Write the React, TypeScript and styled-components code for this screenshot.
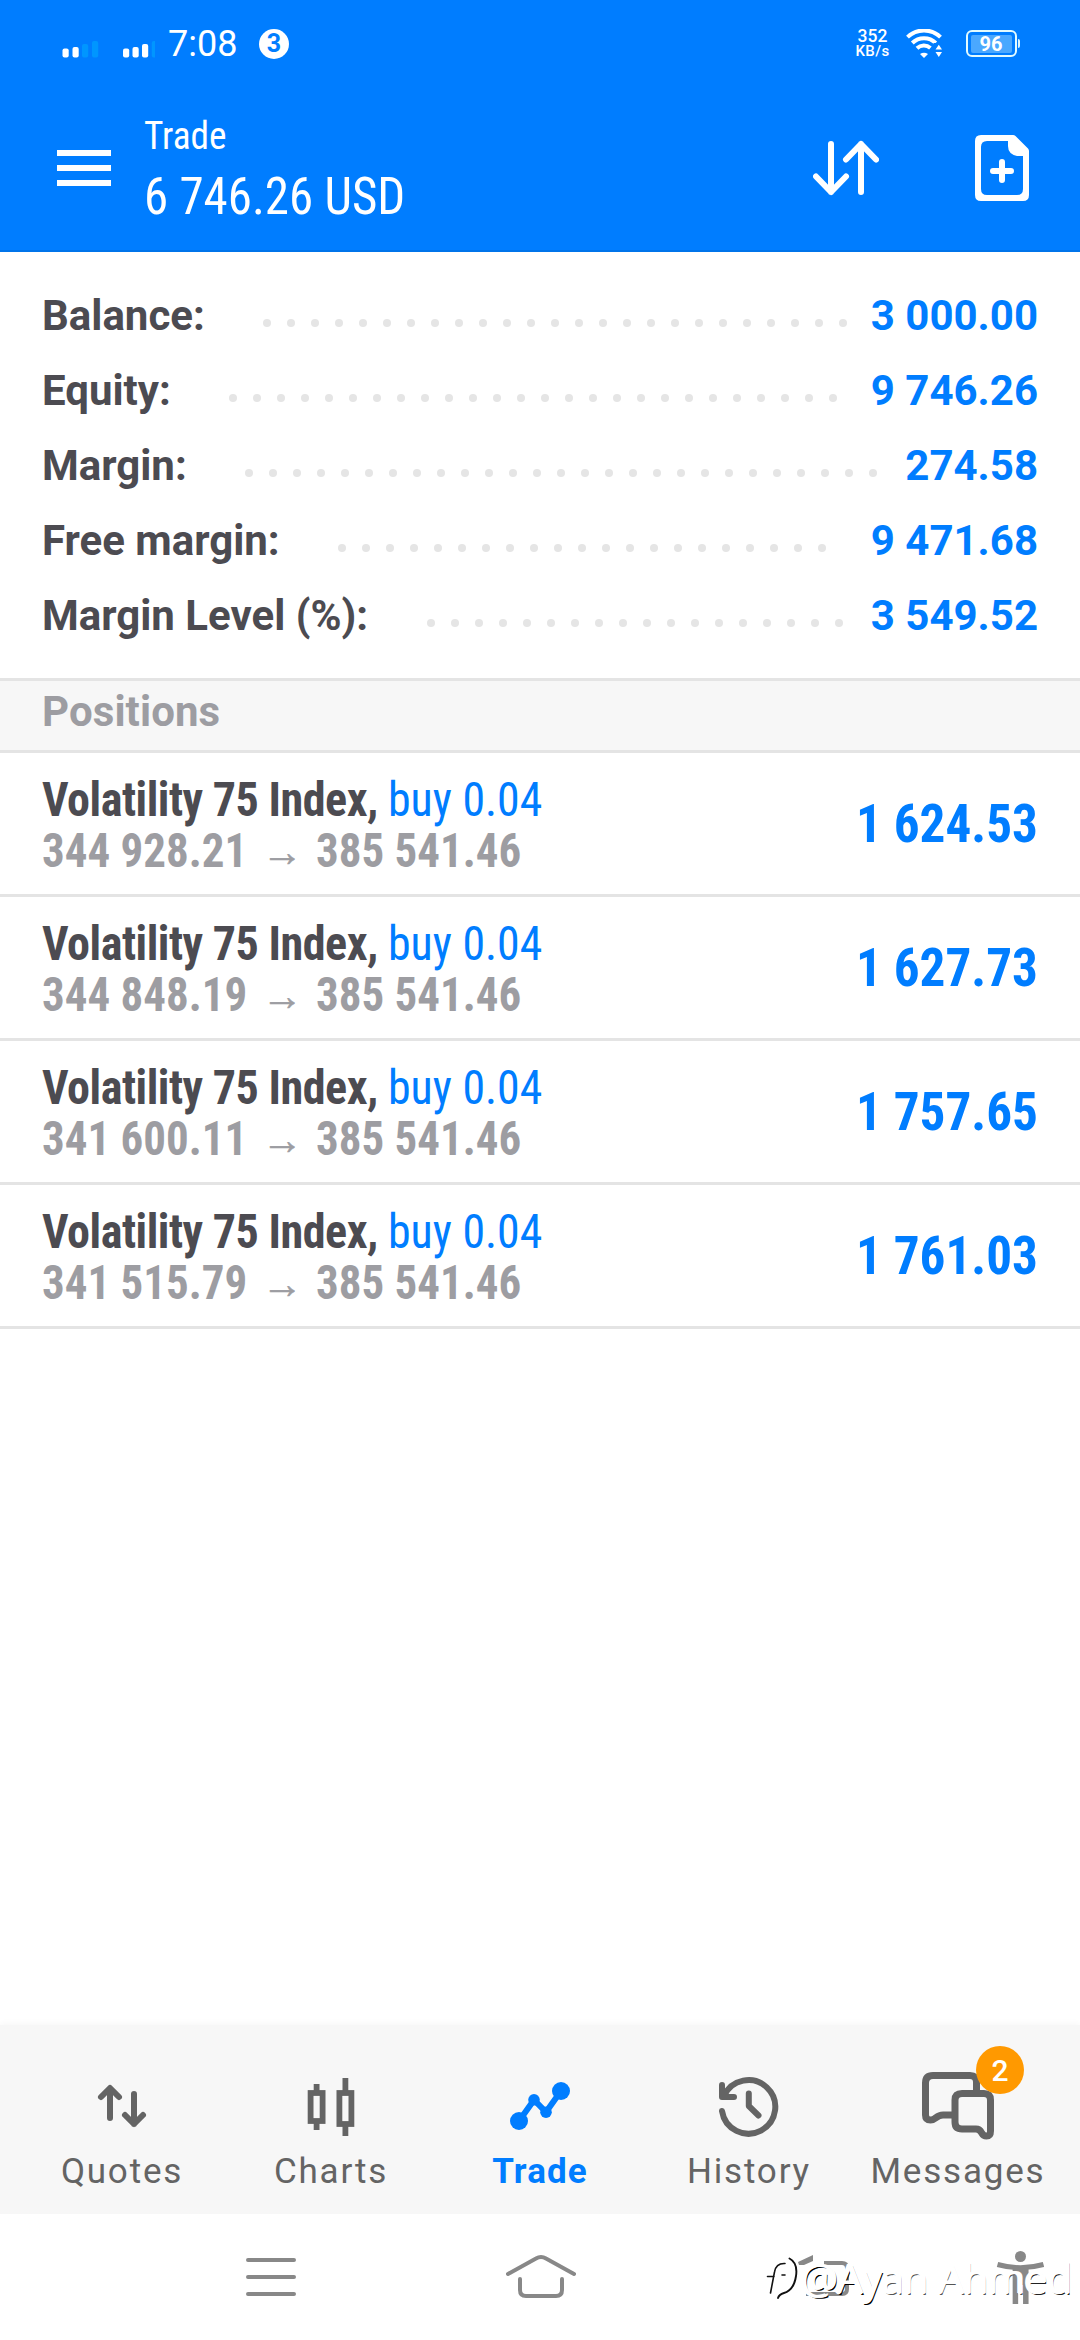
import React from "react";
import styled, { createGlobalStyle } from "styled-components";

const BLUE = "#007dff";
const GREY = "#646464";

const GlobalStyle = createGlobalStyle`
  * { box-sizing: border-box; }
  body { margin: 0; background: #fff; font-family: Roboto, "Noto Sans", sans-serif; }
  svg { display: block; flex: none; }
`;

const Screen = styled.div`
  position: relative;
  width: 1080px;
  height: 2340px;
  display: flex;
  flex-direction: column;
  overflow: hidden;
  background: #fff;
`;

/* Narrow text: condensed face squeezed a little towards one edge */
const Narrow = styled.span<{ $x?: number; $right?: boolean }>`
  display: inline-block;
  white-space: pre;
  font-stretch: 75%;
  transform: scaleX(${(p) => p.$x ?? 0.955});
  transform-origin: ${(p) => (p.$right ? "right" : "left")} center;
`;

/* ---------- header ---------- */

const Header = styled.header`
  height: 252px;
  background: ${BLUE};
  color: #fff;
  border-bottom: 2px solid #0074ea;
`;

const StatusBar = styled.div`
  height: 84px;
  padding: 3px 60px 0 62px;
  display: flex;
  align-items: center;
`;

const Clock = styled.span`
  margin-left: 13px;
  font-size: 36px;
  line-height: 42px;
  width: 70px;
`;

const Counter = styled.span`
  margin-left: 21px;
  width: 30px;
  height: 30px;
  border-radius: 50%;
  background: #fff;
  color: ${BLUE};
  font-size: 25px;
  font-weight: 700;
  line-height: 30px;
  text-align: center;
`;

const Speed = styled.div`
  margin-left: auto;
  width: 35px;
  display: flex;
  flex-direction: column;
  align-items: center;
  font-weight: 500;
`;

const SpeedValue = styled.span`
  font-size: 17.5px;
  line-height: 15px;
`;

const SpeedUnit = styled.span`
  font-size: 15px;
  line-height: 15px;
  letter-spacing: 0.4px;
`;

const WifiBox = styled.div`
  margin: 0 24px 0 16px;
`;

const Battery = styled.div`
  display: flex;
  align-items: center;
`;

const BatteryBody = styled.div`
  width: 51px;
  height: 27px;
  padding: 2.5px;
  border: 2px solid #e2fbff;
  border-radius: 6px;
`;

const BatteryFill = styled.div`
  width: 41px;
  height: 18px;
  border-radius: 2px;
  background: #4aa8ff;
  font-size: 20px;
  font-weight: 700;
  line-height: 19px;
  text-align: center;
`;

const BatteryTip = styled.div`
  width: 2px;
  height: 9px;
  margin-left: 1px;
  border-radius: 0 2px 2px 0;
  background: #d8f4ff;
`;

const AppBar = styled.div`
  height: 168px;
  padding: 0 51px 0 57px;
  display: flex;
  align-items: center;
`;

const MenuButton = styled.div`
  width: 54px;
  display: flex;
  flex-direction: column;
  gap: 9px;
`;

const MenuLine = styled.span`
  height: 6px;
  background: #fff;
`;

const Titles = styled.div`
  margin: 3px auto 0 33px;
  display: flex;
  flex-direction: column;
  gap: 8px;
`;

const Title = styled(Narrow)`
  font-size: 39px;
  line-height: 46px;
`;

const Profit = styled(Narrow)`
  font-size: 51px;
  line-height: 60px;
`;

const Actions = styled.div`
  display: flex;
  align-items: center;
  gap: 96px;
`;

/* ---------- summary ---------- */

const Summary = styled.section`
  padding: 26px 42px 25px;
`;

const SummaryRow = styled.div`
  height: 75px;
  display: flex;
  align-items: center;
  font-size: 42px;
  font-weight: 700;
  line-height: 75px;
`;

const SummaryLabel = styled.span`
  color: #4c4b51;
  white-space: pre;
`;

const SummaryValue = styled.span`
  color: ${BLUE};
  white-space: pre;
`;

const Leader = styled.div`
  flex: 1;
  height: 8px;
  margin: 15px 23px 0 58.5px;
  display: flex;
  flex-wrap: wrap;
  gap: 16px;
  overflow: hidden;
`;

const Dot = styled.i`
  width: 8px;
  height: 8px;
  border-radius: 50%;
  background: #e5e5e5;
`;

/* ---------- positions ---------- */

const SectionTitle = styled.h2`
  margin: 0;
  height: 75px;
  padding-left: 42px;
  border: solid #e4e4e4;
  border-width: 3px 0;
  background: #f7f7f7;
  color: #9d9da2;
  font-size: 42px;
  font-weight: 700;
  line-height: 61px;
  letter-spacing: 0.1px;
`;

const Position = styled.div`
  height: 144px;
  padding: 0 42px;
  border-bottom: 3px solid #e4e4e4;
  display: flex;
  justify-content: space-between;
`;

const Details = styled.div`
  padding-top: 21px;
  font-size: 48px;
  line-height: 51px;
`;

const Line = styled.div`
  display: flex;
  height: 51px;
`;

const Symbol = styled(Narrow)`
  color: #4c4b51;
  font-weight: 700;
  letter-spacing: -0.5px;
`;

const Volume = styled(Narrow)`
  margin-left: -4px;
  color: ${BLUE};
`;

const Price = styled(Narrow)`
  color: #9d9da2;
  font-weight: 700;
`;

const Arrow = styled.span`
  width: 55px;
  margin: 2px 6px 0 -6px;
  color: #9d9da2;
  -webkit-text-stroke: 0.6px #9d9da2;
  font-family: "Liberation Sans", sans-serif;
  font-size: 41px;
  font-weight: 700;
  text-align: center;
`;

const Result = styled(Narrow)`
  color: ${BLUE};
  font-size: 54px;
  font-weight: 700;
  line-height: 142px;
`;

/* ---------- bottom ---------- */

const Tabs = styled.nav`
  margin-top: auto;
  height: 189px;
  padding: 45px 17.5px 0;
  display: flex;
  background: #f7f7f7;
  box-shadow: 0 -2px 6px rgba(0, 0, 0, 0.03);
`;

const Tab = styled.div<{ $active?: boolean }>`
  position: relative;
  flex: 1;
  display: flex;
  flex-direction: column;
  align-items: center;
  gap: 9px;
  color: ${(p) => (p.$active ? BLUE : GREY)};
  font-size: 35px;
  font-weight: ${(p) => (p.$active ? 700 : 400)};
  letter-spacing: ${(p) => (p.$active ? 1.1 : 1.8)}px;
  line-height: 41px;
`;

const Badge = styled.span`
  position: absolute;
  left: 122.5px;
  top: -24px;
  width: 48px;
  height: 48px;
  border-radius: 50%;
  background: #ff9900;
  color: #fff;
  font-size: 30px;
  font-weight: 500;
  letter-spacing: 0;
  line-height: 49px;
  text-align: center;
`;

const SystemBar = styled.div`
  height: 126px;
  padding-left: 246px;
  display: flex;
  align-items: center;
  background: #fff;
`;

const SystemKey = styled.div<{ $gap: number }>`
  margin-left: ${(p) => p.$gap}px;
`;

const Signature = styled.div`
  position: absolute;
  right: 8px;
  bottom: 34px;
  display: flex;
  align-items: center;
  color: #fff;
  font-family: "Noto Sans", sans-serif;
  font-size: 41px;
  font-weight: 300;
  line-height: 56px;
  white-space: pre;
`;

const Ink = styled.span<{ $shade: string; $x: number }>`
  text-shadow: -1px 0 0 #fff, 1px -1px 0 #fff, -2px -1px 0 #fff,
    ${(p) => p.$x}px 1px 0 ${(p) => p.$shade};
`;

/* ---------- icons ---------- */

const SignalIcon = () => (
  <svg width="93" height="30" viewBox="0 0 93 30">
    {[
      [0.5, 19.5, 1], [10.5, 18, 1], [20, 15, 0], [30, 12, 0],
      [61, 19.5, 1], [70.5, 18, 1], [80, 15, 1], [89.8, 12, 0],
    ].map(([x, y, on]) => (
      <rect key={x} x={x} y={y} width="6.2" height={28.6 - y} rx="2" fill={on ? "#fff" : "#0096ff"} />
    ))}
  </svg>
);

const WifiIcon = () => (
  <svg width="36" height="29" viewBox="0 0 36 29">
    <g fill="none" stroke="#fff" strokeWidth="4">
      <path d="M1.5 8.2a23.5 23.5 0 0 1 33 0" />
      <path d="M6.3 14a16.6 16.6 0 0 1 23.4 0" />
      <path d="M11 19.3a10 10 0 0 1 13.4-.4" />
    </g>
    <path d="M14 25q4-2.6 8 0l-4 4z" fill="#fff" />
    <rect x="27.5" y="14" width="9" height="15" fill={BLUE} />
    <path d="M29.5 20.5l3.3-4.8 3.2 4.8zM29.5 23l3.3 5 3.2-5z" fill="#fff" />
  </svg>
);

const SortIcon = () => (
  <svg width="66" height="60" viewBox="0 0 66 60" fill="none" stroke="#fff" strokeWidth="6" strokeLinecap="round" strokeLinejoin="round">
    <path d="M18 6v48M3 38.500L18 54L33 38.500" />
    <path d="M48 54V6M33 21.500L48 6L63 21.500" />
  </svg>
);

const NewOrderIcon = () => (
  <svg width="54" height="66" viewBox="0 0 54 66">
    <path
      fillRule="evenodd"
      fill="#fff"
      d="M6 0H38Q39.500 0 40.500 1L53 13.500Q54 14.500 54 16V60Q54 66 48 66H6Q0 66 0 60V6Q0 0 6 0ZM12 6Q6 6 6 12V54Q6 60 12 60H42Q48 60 48 54V21H42Q33 19 33 11V6Z"
    />
    <path d="M18 36H36M27 27V45" stroke="#fff" strokeWidth="6" strokeLinecap="round" />
  </svg>
);

const QuotesIcon = () => (
  <svg width="80" height="72" viewBox="82 2070 80 72" fill="none" stroke={GREY} strokeWidth="6" strokeLinecap="round" strokeLinejoin="round">
    <path d="M110 2118V2088.500M101 2097L110 2088L119 2097" />
    <path d="M134 2094V2124M125 2115L134 2124L143 2115" />
  </svg>
);

const ChartsIcon = () => (
  <svg width="80" height="72" viewBox="291 2070 80 72" fill="none" stroke={GREY} strokeWidth="5.800">
    <rect x="310.600" y="2093" width="12" height="28" />
    <path d="M316.600 2084V2092M316.600 2122V2130M345.400 2078V2092M345.400 2125V2136" />
    <rect x="339.400" y="2093" width="12" height="31" />
  </svg>
);

const TradeIcon = () => (
  <svg width="80" height="72" viewBox="500 2070 80 72" fill={BLUE}>
    <path d="M519 2121L534 2100L546 2112L561 2091" fill="none" stroke={BLUE} strokeWidth="6" />
    <circle cx="519" cy="2121" r="9" />
    <circle cx="534" cy="2099.800" r="5.800" />
    <circle cx="546" cy="2112.200" r="5.800" />
    <circle cx="561" cy="2091" r="9" />
  </svg>
);

const HistoryIcon = () => (
  <svg width="80" height="72" viewBox="709 2070 80 72" fill="none" stroke={GREY} strokeWidth="6" strokeLinecap="round" strokeLinejoin="round">
    <path d="M724 2096A26.800 26.800 0 1 1 722 2111" />
    <path d="M722 2085V2097H734" />
    <path d="M748.800 2093.500V2106L758.500 2115.500" />
  </svg>
);

const MessagesIcon = () => (
  <svg width="80" height="72" viewBox="918 2070 80 72" fill="none" stroke={GREY} strokeWidth="7" strokeLinejoin="round">
    <path d="M976.500 2094V2082Q976.500 2075.500 970 2075.500H933Q925.500 2075.500 925.500 2083V2115Q925.500 2120 930.500 2120C936 2120 936 2115 943 2115H954" />
    <path d="M962 2093.500H984Q990.500 2093.500 990.500 2100V2131Q990.500 2136 986.500 2136C980 2136 983 2129 976 2129H962Q955 2129 955 2122V2100Q955 2093.500 962 2093.500Z" />
  </svg>
);

const RecentsKey = () => (
  <svg width="50" height="60" viewBox="0 0 50 60" stroke="#888" strokeWidth="4" strokeLinecap="round">
    <path d="M2 13H48M2 30H48M2 47H48" />
  </svg>
);

const HomeKey = () => (
  <svg width="70" height="60" viewBox="506 2247 70 60" fill="none" stroke="#888" strokeWidth="4" strokeLinecap="round" strokeLinejoin="round">
    <path d="M508 2274L536 2258.500Q541 2255.500 546 2258.500L574 2274" />
    <path d="M520 2279V2290Q520 2296 526 2296H556Q562 2296 562 2290V2279" />
  </svg>
);

const BackKey = () => (
  <svg width="55" height="60" viewBox="796 2247 55 60" fill="none" stroke="#888" strokeWidth="4">
    <path d="M798 2262L813 2255V2261L804 2265H799Z" fill="#888" stroke="none" />
    <path d="M824 2263H842Q847 2263 847 2268V2289Q847 2294 842 2294H806" />
  </svg>
);

const AccessibilityKey = () => (
  <svg width="48" height="60" viewBox="996 2247 48 60" fill="none" stroke="#888" strokeWidth="5">
    <circle cx="1020.500" cy="2256.500" r="5.500" fill="#888" stroke="none" />
    <path d="M997.500 2264.500Q1020.500 2271 1043.500 2264.500" />
    <path d="M1015.400 2267V2304M1025.800 2267V2304" strokeWidth="5.500" />
    <path d="M1020.600 2268V2285" strokeWidth="8" />
  </svg>
);

const SignatureMark = () => (
  <svg width="36" height="52" viewBox="764 2256 36 52" fill="none" strokeLinecap="round">
    <path d="M787 2266H778Q773 2269 772 2276L768 2297M766 2281H775M787 2262Q796 2264 794.500 2280Q793 2297 778 2300L777 2303" stroke="#fff" strokeWidth="5" />
    <path d="M784 2267.500Q775 2267 773.500 2276L769.500 2297M766.500 2280.500H773M781 2279H784" stroke="#111" strokeWidth="1.600" />
    <path d="M788.500 2262.500Q797 2267 795 2280Q793 2294 783 2297Q778 2298.500 777 2302" stroke="#111" strokeWidth="1.900" />
  </svg>
);

/* ---------- data ---------- */

const summary = [
  ["Balance:", "3 000.00"],
  ["Equity:", "9 746.26"],
  ["Margin:", "274.58"],
  ["Free margin:", "9 471.68"],
  ["Margin Level (%):", "3 549.52"],
];

const positions = [
  ["344 928.21", "1 624.53"],
  ["344 848.19", "1 627.73"],
  ["341 600.11", "1 757.65"],
  ["341 515.79", "1 761.03"],
];

export default function App() {
  return (
    <>
      <GlobalStyle />
      <Screen>
        <Header>
          <StatusBar>
            <SignalIcon />
            <Clock>7:08</Clock>
            <Counter>3</Counter>
            <Speed>
              <SpeedValue>352</SpeedValue>
              <SpeedUnit>KB/s</SpeedUnit>
            </Speed>
            <WifiBox>
              <WifiIcon />
            </WifiBox>
            <Battery>
              <BatteryBody>
                <BatteryFill>96</BatteryFill>
              </BatteryBody>
              <BatteryTip />
            </Battery>
          </StatusBar>
          <AppBar>
            <MenuButton>
              <MenuLine />
              <MenuLine />
              <MenuLine />
            </MenuButton>
            <Titles>
              <Title>Trade</Title>
              <Profit $x={0.96}>6 746.26 USD</Profit>
            </Titles>
            <Actions>
              <SortIcon />
              <NewOrderIcon />
            </Actions>
          </AppBar>
        </Header>

        <Summary>
          {summary.map(([label, value]) => (
            <SummaryRow key={label}>
              <SummaryLabel>{label}</SummaryLabel>
              <Leader>
                {Array.from({ length: 30 }, (_, i) => (
                  <Dot key={i} />
                ))}
              </Leader>
              <SummaryValue>{value}</SummaryValue>
            </SummaryRow>
          ))}
        </Summary>

        <SectionTitle>Positions</SectionTitle>
        {positions.map(([open, result]) => (
          <Position key={open}>
            <Details>
              <Line>
                <Symbol $x={0.96}>Volatility 75 Index,</Symbol>
                <Volume>buy 0.04</Volume>
              </Line>
              <Line>
                <Price $x={0.937}>{open}</Price>
                <Arrow>→</Arrow>
                <Price $x={0.937}>385 541.46</Price>
              </Line>
            </Details>
            <Result $x={0.948} $right>
              {result}
            </Result>
          </Position>
        ))}

        <Tabs>
          <Tab>
            <QuotesIcon />
            Quotes
          </Tab>
          <Tab>
            <ChartsIcon />
            Charts
          </Tab>
          <Tab $active>
            <TradeIcon />
            Trade
          </Tab>
          <Tab>
            <HistoryIcon />
            History
          </Tab>
          <Tab>
            <MessagesIcon />
            Messages
            <Badge>2</Badge>
          </Tab>
        </Tabs>

        <SystemBar>
          <SystemKey $gap={0}>
            <RecentsKey />
          </SystemKey>
          <SystemKey $gap={210}>
            <HomeKey />
          </SystemKey>
          <SystemKey $gap={220}>
            <BackKey />
          </SystemKey>
          <SystemKey $gap={145}>
            <AccessibilityKey />
          </SystemKey>
        </SystemBar>

        <Signature>
          <SignatureMark />
          <Ink $shade="#000" $x={1.5}>@Ay</Ink>
          <Ink $shade="#555" $x={1}>an Ahm</Ink>
          <Ink $shade="#222" $x={1}>ed</Ink>
        </Signature>
      </Screen>
    </>
  );
}
